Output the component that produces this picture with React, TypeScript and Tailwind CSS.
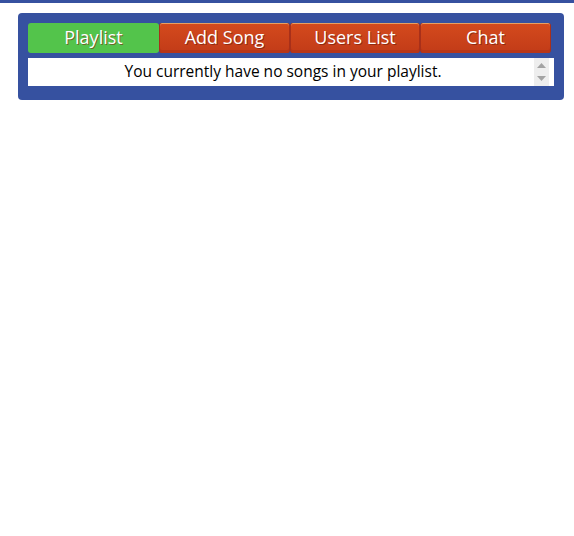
export default function App() {
  const tabs = [
    { t: "Playlist", w: "w-[131px]" },
    { t: "Add Song", w: "w-[131px]" },
    { t: "Users List", w: "w-[130px]" },
    { t: "Chat", w: "w-[131px]" },
  ];
  return (
    <div className="w-[574px] h-[536px] bg-white" style={{ fontFamily: '"Open Sans", "Noto Sans", sans-serif' }}>
      <div className="h-[3px] bg-[#3651a0]" />
      <div className="mt-[10px] ml-[18px] w-[546px] rounded-[4px] bg-[#3651a0] pt-[10px] pl-[10px] pr-[10px] pb-[14px]">
        <div className="flex w-[523px] h-[30px]">
          {tabs.map(({ t, w }, i) => (
            <div
              key={t}
              className={
                i === 0
                  ? `${w} shrink-0 flex items-center justify-center rounded-[3px] bg-[#53c44b] text-white text-[18px] leading-none pb-[2px] [text-shadow:1px_1px_0_rgba(120,40,20,0.6)]`
                  : `${w} shrink-0 flex items-center justify-center rounded-[3px] border-x border-[#a8301a] bg-gradient-to-b from-[#d44a1d] to-[#c23b18] shadow-[inset_0_1px_0_#e8a060,inset_0_-3px_0_#b83617] text-white text-[18px] leading-none pb-[2px] [text-shadow:1px_1px_0_rgba(90,20,10,0.5)]`
              }
            >
              {t}
            </div>
          ))}
        </div>
        <div className="mt-[5px] h-[28px] bg-white flex">
          <div className="flex-1 flex items-center justify-center text-[15.5px] text-black pl-[4px] pb-[1px]">
            You currently have no songs in your playlist.
          </div>
          <div className="w-[15px] mr-[5px] bg-[#eeeeee] flex flex-col items-center justify-between py-[5px]">
            <svg width="9" height="5" viewBox="0 0 9 5"><path d="M0 5 L4.5 0 L9 5 Z" fill="#a3a3a3" /></svg>
            <svg width="9" height="5" viewBox="0 0 9 5"><path d="M0 0 L4.5 5 L9 0 Z" fill="#a3a3a3" /></svg>
          </div>
        </div>
      </div>
    </div>
  );
}
